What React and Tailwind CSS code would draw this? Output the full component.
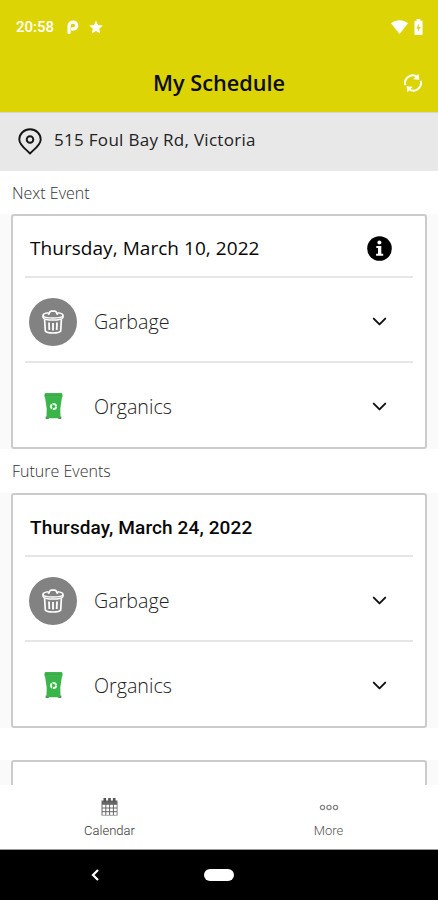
import { ChevronDown } from 'lucide-react'

const events = [
  {
    date: 'Thursday, March 10, 2022',
    dateClass: "font-['Open_Sans'] text-[19px] tracking-[0.05px]",
    info: true,
    items: ['Garbage', 'Organics'],
  },
  {
    date: 'Thursday, March 24, 2022',
    dateClass: "pt-[2px] font-['Roboto'] text-[19px] font-medium tracking-[0.12px]",
    info: false,
    items: ['Garbage', 'Organics'],
  },
]

const StatusBar = () => (
  <div className="flex h-[54px] items-center px-4 text-white">
    <span className="font-['Roboto'] text-[15px] font-medium">20:58</span>
    <svg className="ml-[13px] h-[15px] w-[12px]" viewBox="0 0 12 15">
      <path d="M2.100 8V5.800a3.700 3.700 0 0 1 3.700-3.700h.5a3.300 3.300 0 0 1 0 6.900H5.500M2.100 9v3.500" fill="none" stroke="currentColor" strokeWidth="3.300" strokeLinecap="round" />
    </svg>
    <svg className="ml-[10px] h-[14px] w-[14px]" viewBox="0 0 24 24" fill="currentColor">
      <path d="M12 .8l3.4 7.6 8.3.9-6.200 5.600 1.700 8.200L12 19l-7.200 4.100 1.700-8.200L.3 9.300l8.300-.9z" />
    </svg>
    <svg className="ml-auto h-[14px] w-[17px]" viewBox="0 0 17 14" fill="currentColor">
      <path d="M0 3.200C4.500-.9 12.500-.9 17 3.200L8.500 14z" />
    </svg>
    <svg className="ml-[6px] mr-[-1px] h-[16px] w-[9px]" viewBox="0 0 10 16" preserveAspectRatio="none">
      <path d="M3 0h4v1.700h1.500q1 0 1 1V15q0 1-1 1h-7q-1 0-1-1V2.700q0-1 1-1H3z" fill="currentColor" />
      <path d="M5.800 4.200L2.700 9.400h2L4.200 13.300l3.100-5.200h-2z" fill="#dcd405" />
    </svg>
  </div>
)

const RefreshIcon = () => (
  <svg className="h-5 w-5" viewBox="0 0 20 20">
    <g fill="none" stroke="white" strokeWidth="2">
      <path d="M2.300 12.200A7.700 7.700 0 0 1 13.600 3.500" />
      <path d="M17.700 7.800A7.700 7.700 0 0 1 6.400 16.500" />
    </g>
    <path d="M15.500.8l.9 6-6.200-.5zM4.500 19.200l-.9-6 6.200.5z" fill="white" />
  </svg>
)

const PinIcon = () => (
  <svg className="h-[27px] w-6" viewBox="0 0 24 27" fill="none" stroke="#151515" strokeWidth="1.900">
    <path d="M12 25.500C8.500 21.500 1.300 17.200 1.300 11.400a10.700 10.200 0 0 1 21.400 0C22.700 17.200 15.500 21.500 12 25.500z" strokeLinejoin="round" />
    <circle cx="12" cy="11.500" r="3.300" />
  </svg>
)

const InfoIcon = () => (
  <svg className="h-[25px] w-[25px]" viewBox="0 0 25 25">
    <circle cx="12.500" cy="12.500" r="12.300" fill="black" />
    <circle cx="12.400" cy="6.500" r="2" fill="white" />
    <path d="M9.300 10h5v7.700h1.900v2.100H9.100v-2.100H11v-5.600H9.300z" fill="white" />
  </svg>
)

const GarbageIcon = () => (
  <div className="flex h-12 w-12 items-center justify-center rounded-full bg-[#828282]">
    <svg className="h-6 w-[22px]" viewBox="0 0 22 24" fill="none" stroke="white" strokeWidth="1.500">
      <path d="M6.500 2.800C3.200 3.200 1 4 1 5.300c0 1.700 4.500 2.800 10 2.800s10-1.100 10-2.800c0-1.300-2.200-2.100-5.500-2.500" />
      <path d="M1 5.300v2.200C1.600 9.100 5.500 10.100 11 10.100s9.400-1 10-2.600V5.300" />
      <path d="M6.300 4.700l1.300-2.300Q8.100 1.200 9.300 1.200h3.400q1.200 0 1.700 1.200l1.300 2.300" strokeWidth="1.800" />
      <path d="M2.600 9.200l.7 11.800C4.200 22.400 7.200 23 11 23s6.800-.6 7.700-2L19.400 9.200" strokeWidth="1.700" />
      <path d="M7 12.500l.3 7.500M11 13v7.500M15 12.500l-.3 7.500" strokeWidth="1.800" />
    </svg>
  </div>
)

const OrganicsIcon = () => (
  <div className="flex h-12 w-12 items-center justify-center">
    <svg className="relative -top-px h-[26px] w-[19px]" viewBox="0 0 19 26">
      <path d="M1.700 23.500h3v2.500h-3zM14.300 23.500h3v2.500h-3z" fill="#66766a" />
      <path d="M1 4h17L16.300 15.500l.2 9.700H2.500l.2-9.700z" fill="#39b54a" />
      <path d="M1.800 0h15.400q1 0 1.200 1l.2 2.500q0 1-1 1H1.400q-1 0-1-1L.6 1q.2-1 1.200-1z" fill="#42b750" />
      <path d="M.8 2.200h17.400" stroke="#2f9f42" strokeWidth=".7" />
      <circle cx="9.500" cy="13.500" r="2.600" fill="none" stroke="#e8f8e9" strokeWidth="2" strokeDasharray="4.650 .8" />
    </svg>
  </div>
)

const EventRow = ({ name }) => (
  <div className="flex h-[85px] items-center border-t-2 border-[#e6e6e6] px-1 pt-1">
    {name === 'Garbage' ? <GarbageIcon /> : <OrganicsIcon />}
    <span className="ml-[17px] flex-1 font-['Open_Sans'] text-[19.700px] font-light text-[#222]">{name}</span>
    <ChevronDown className="mr-[18px] h-[23px] w-[23px] text-[#111]" strokeWidth={2} />
  </div>
)

const EventCard = ({ event }) => (
  <div className="bg-[#fafafa] px-[11px]">
    <div className="h-[235px] rounded-[3px] border-2 border-[#cbcbcb] bg-white px-3">
      <div className="flex h-[60px] items-center justify-between pr-[21px] pl-[5px] pt-[5px]">
        <span className={`whitespace-nowrap text-[#080808] ${event.dateClass}`}>{event.date}</span>
        {event.info && <InfoIcon />}
      </div>
      {event.items.map((name) => (
        <EventRow key={name} name={name} />
      ))}
    </div>
  </div>
)

const SectionLabel = ({ children }) => (
  <div className="flex items-center px-3 font-['Open_Sans'] text-base font-light text-[#333]">{children}</div>
)

const CalendarIcon = () => (
  <svg className="h-[18px] w-[17px]" viewBox="0 0 17 18">
    <path d="M.5 2.500h16v15H.5z" fill="#666" />
    <path d="M2.500 0h2.600v4H2.500zM7.200 0h2.600v4H7.200zM11.900 0h2.600v4h-2.600z" fill="#555" />
    <g fill="white">
      {[6.8, 10.5, 14.2].map((y) =>
        [1.5, 5.3, 9.1, 12.9].map((x) => <rect key={`${x}-${y}`} x={x} y={y} width="2.800" height="2.700" />)
      )}
    </g>
  </svg>
)

const TabBar = () => (
  <div className="flex h-[65px] border-b border-[#999] bg-white font-['Roboto'] text-[13px] font-light text-[#333]">
    <div className="flex flex-1 flex-col items-center pt-[13px]">
      <CalendarIcon />
      <span className="mt-[6px] leading-[18px]">Calendar</span>
    </div>
    <div className="flex flex-1 flex-col items-center pt-[13px] text-[#555]">
      <svg className="h-[18px] w-5" viewBox="0 0 20 18" fill="none" stroke="#888" strokeWidth="1.300">
        <circle cx="3.500" cy="9.500" r="2.100" />
        <circle cx="10" cy="9.500" r="2.100" />
        <circle cx="16.500" cy="9.500" r="2.100" />
      </svg>
      <span className="mt-[6px] leading-[18px]">More</span>
    </div>
  </div>
)

const NavBar = () => (
  <div className="grid h-[50px] grid-cols-[190px_58px_190px] items-center justify-items-center bg-black">
    <svg className="h-[12px] w-[8px]" viewBox="0 0 8 12">
      <path d="M7 1L2 6l5 5" fill="none" stroke="white" strokeWidth="2.200" />
    </svg>
    <div className="h-3 w-[30px] rounded-full bg-white" />
  </div>
)

const App = () => (
  <div className="flex h-[900px] w-[438px] flex-col overflow-hidden bg-white">
    <header className="h-[112px] shrink-0 bg-[#dcd405]">
      <StatusBar />
      <div className="grid h-[58px] grid-cols-[1fr_auto_1fr] items-center pr-[15px] pl-[15px]">
        <h1 className="col-start-2 font-['Open_Sans'] text-[21.700px] font-semibold text-[#0c0c0c]">My Schedule</h1>
        <div className="justify-self-end"><RefreshIcon /></div>
      </div>
    </header>
    <div className="flex h-[59px] shrink-0 items-center gap-3 border-t border-[#d6d6cf] bg-[#e8e8e8] px-[18px] pb-px">
      <PinIcon />
      <span className="pb-[3px] font-['Open_Sans'] text-[17px] tracking-[0.3px] text-[#222]">515 Foul Bay Rd, Victoria</span>
    </div>
    <main className="min-h-0 flex-1 overflow-hidden">
      <div className="h-[43px] pt-[10px]"><SectionLabel>Next Event</SectionLabel></div>
      <EventCard event={events[0]} />
      <div className="h-[44px] pt-[10px]"><SectionLabel>Future Events</SectionLabel></div>
      <EventCard event={events[1]} />
      <div className="mt-8 bg-[#fafafa] px-[11px]">
        <div className="h-[80px] rounded-[3px] border-2 border-[#cbcbcb] bg-white" />
      </div>
    </main>
    <TabBar />
    <NavBar />
  </div>
)

export default App
